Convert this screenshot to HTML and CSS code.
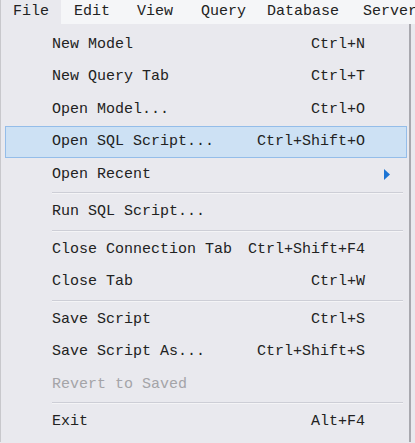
FILE: index.html
```html
<!DOCTYPE html>
<html>
<head>
<meta charset="utf-8">
<link rel="stylesheet" href="styles.css">
</head>
<body>
<div class="menubar">
  <span class="top t-file">File</span>
  <span class="top t-edit">Edit</span>
  <span class="top t-view">View</span>
  <span class="top t-query">Query</span>
  <span class="top t-db">Database</span>
  <span class="top t-server">Server</span>
</div>
<div class="menu">
  <div class="item"><span>New Model</span><span class="sc">Ctrl+N</span></div>
  <div class="item"><span>New Query Tab</span><span class="sc">Ctrl+T</span></div>
  <div class="item"><span>Open Model...</span><span class="sc">Ctrl+O</span></div>
  <div class="item hl"><span>Open SQL Script...</span><span class="sc">Ctrl+Shift+O</span></div>
  <div class="item"><span>Open Recent</span><span class="sc arrow"><svg width="7" height="11" viewBox="0 0 7 11"><path d="M0 0 L6 5.5 L0 11 Z" fill="#1c74d4"/></svg></span></div>
  <div class="sep"></div>
  <div class="item"><span>Run SQL Script...</span></div>
  <div class="sep"></div>
  <div class="item"><span>Close Connection Tab</span><span class="sc">Ctrl+Shift+F4</span></div>
  <div class="item"><span>Close Tab</span><span class="sc">Ctrl+W</span></div>
  <div class="sep"></div>
  <div class="item"><span>Save Script</span><span class="sc">Ctrl+S</span></div>
  <div class="item"><span>Save Script As...</span><span class="sc">Ctrl+Shift+S</span></div>
  <div class="item disabled"><span>Revert to Saved</span></div>
  <div class="sep"></div>
  <div class="item"><span>Exit</span><span class="sc">Alt+F4</span></div>
</div>
</body>
</html>
```

FILE: styles.css
```css
html, body {
  margin: 0;
  padding: 0;
  background: #e9e9ee;
  font-family: "Liberation Mono", "DejaVu Sans Mono", monospace;
  font-size: 15px;
  color: #222222;
}
.menubar {
  display: flex;
  height: 24px;
  background: #f5f6f8;
  overflow: hidden;
  white-space: nowrap;
}
.top {
  height: 24px;
  line-height: 24px;
  flex: none;
}
.t-file {
  padding: 0 12px;
  background: #e9e9ee;
  border-left: 1px solid #c8c8cc;
}
.t-edit { padding: 0 14px 0 13px; }
.t-view { padding: 0 15px 0 13px; }
.t-query { padding: 0 10px 0 13px; }
.t-db { padding: 0 11px 0 11px; }
.t-server { padding: 0 0 0 13px; }
.menu {
  width: 411px;
  box-sizing: border-box;
  border-left: 1px solid #c8c8cc;
  border-right: 2px solid #a8a8ae;
  padding: 4px 2px 4px 4px;
}
.item {
  display: flex;
  align-items: center;
  height: 32.5px;
  padding: 0 41px 0 46px;
  border: 1px solid transparent;
  box-sizing: border-box;
  white-space: nowrap;
}
.item.hl {
  background: #cde1f4;
  border-color: #94bde9;
}
.item.disabled {
  color: #a4a4a8;
}
.sc {
  margin-left: auto;
}
.arrow {
  display: flex;
  margin-right: -26px;
}
.sep {
  height: 1px;
  margin: 1.5px 4px 1.5px 47px;
  background: #cdced6;
  border-bottom: 1px solid #f4f4f6;
}
```
